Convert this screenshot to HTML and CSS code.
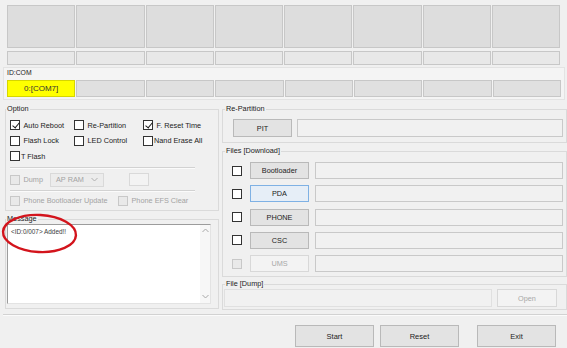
FILE: index.html
```html
<!DOCTYPE html>
<html lang="en">
<head>
  <meta charset="UTF-8" />
  <title>Odin3</title>
  <link rel="stylesheet" href="styles.css">
</head>
<body>

  <div class="ports">
    <div class="cell-row big">
      <div class="cell"></div><div class="cell"></div><div class="cell"></div><div class="cell"></div>
      <div class="cell"></div><div class="cell"></div><div class="cell"></div><div class="cell"></div>
    </div>
    <div class="cell-row small">
      <div class="cell"></div><div class="cell"></div><div class="cell"></div><div class="cell"></div>
      <div class="cell"></div><div class="cell"></div><div class="cell"></div><div class="cell"></div>
    </div>
    <div class="com-box">
      <div class="com-label">ID:COM</div>
      <div class="cell-row com">
        <div class="cell active">0:[COM7]</div><div class="cell"></div><div class="cell"></div><div class="cell"></div>
        <div class="cell"></div><div class="cell"></div><div class="cell"></div><div class="cell"></div>
      </div>
    </div>
  </div>

  <div class="main">
    <div class="col left">
      <fieldset class="group option">
        <legend>Option</legend>
        <div class="group-body">
          <div class="opt-grid">
            <label class="check"><span class="cb on"></span>Auto Reboot</label>
            <label class="check"><span class="cb"></span>Re-Partition</label>
            <label class="check"><span class="cb on"></span>F. Reset Time</label>
            <label class="check"><span class="cb"></span>Flash Lock</label>
            <label class="check"><span class="cb"></span>LED Control</label>
            <label class="check tight"><span class="cb"></span>Nand Erase All</label>
            <label class="check tight"><span class="cb"></span>T Flash</label>
          </div>
          <div class="sep"></div>
          <div class="dump-row">
            <label class="check off dump-label"><span class="cb"></span>Dump</label>
            <div class="select">
              <span>AP RAM</span>
              <svg width="7" height="5" viewBox="0 0 7 5"><polyline points="0.5,1 3.5,4 6.5,1" fill="none" stroke="#b0b0b0" stroke-width="1"/></svg>
            </div>
            <div class="mini-box"></div>
          </div>
          <div class="sep last"></div>
          <div class="phone-row">
            <label class="check off wide"><span class="cb"></span>Phone Bootloader Update</label>
            <label class="check off"><span class="cb"></span>Phone EFS Clear</label>
          </div>
        </div>
      </fieldset>

      <fieldset class="group message">
        <legend>Message</legend>
        <div class="group-body">
          <div class="log">
            <div class="log-text">&lt;ID:0/007&gt; Added!!</div>
            <div class="scroll">
              <svg width="7" height="5" viewBox="0 0 7 5"><polyline points="0.5,4 3.5,1 6.5,4" fill="none" stroke="#a8a8a8" stroke-width="1"/></svg>
              <svg width="7" height="5" viewBox="0 0 7 5"><polyline points="0.5,1 3.5,4 6.5,1" fill="none" stroke="#a8a8a8" stroke-width="1"/></svg>
            </div>
          </div>
        </div>
      </fieldset>
    </div>

    <div class="col right">
      <fieldset class="group repart">
        <legend>Re-Partition</legend>
        <div class="group-body">
          <div class="file-row">
            <button class="btn">PIT</button>
            <div class="field"></div>
          </div>
        </div>
      </fieldset>

      <fieldset class="group files">
        <legend>Files [Download]</legend>
        <div class="group-body">
          <div class="file-row"><span class="cb"></span><button class="btn">Bootloader</button><div class="field"></div></div>
          <div class="file-row"><span class="cb"></span><button class="btn focus">PDA</button><div class="field"></div></div>
          <div class="file-row"><span class="cb"></span><button class="btn">PHONE</button><div class="field"></div></div>
          <div class="file-row"><span class="cb"></span><button class="btn">CSC</button><div class="field"></div></div>
          <div class="file-row off"><span class="cb"></span><button class="btn" disabled>UMS</button><div class="field"></div></div>
        </div>
      </fieldset>

      <fieldset class="group dump">
        <legend>File [Dump]</legend>
        <div class="group-body">
          <div class="file-row">
            <div class="field light"></div>
            <button class="btn" disabled>Open</button>
          </div>
        </div>
      </fieldset>
    </div>
  </div>

  <div class="actions-sep"></div>
  <div class="actions">
    <button class="btn big">Start</button>
    <button class="btn big reset">Reset</button>
    <button class="btn big">Exit</button>
  </div>

  <!-- red marker drawn over the message box -->
  <svg class="marker" width="82" height="46" viewBox="0 0 82 46">
    <ellipse cx="39.5" cy="22.5" rx="36.5" ry="18.5" transform="rotate(3 39.5 22.5)" fill="none" stroke="#d3141c" stroke-width="2.4"/>
  </svg>

</body>
</html>
```

FILE: styles.css
```css
* {
  box-sizing: border-box;
}

body {
  margin: 0;
  width: 567px;
  height: 348px;
  overflow: hidden;
  position: relative;
  background: #f0f0f0;
  font-family: "Liberation Sans", Arial, sans-serif;
  font-size: 7.3px;
  color: #222;
}

/* Port cells */
.ports {
  width: 560px;
  padding: 5px 0 0 7px;
}

.cell-row {
  display: grid;
  grid-template-columns: repeat(8, 1fr);
  column-gap: 1px;
}

.cell {
  background: #dddddd;
  border: 1px solid #c7c7c7;
}

.big .cell {
  height: 43px;
}

.small {
  margin-top: 3px;
}

.small .cell {
  height: 14px;
  background: #e8e8e8;
}

.com-box {
  width: 562px;
  margin: 2px 0 0 -4px;
  padding: 0 3px 2px 3px;
  background: #f4f4f4;
  border: 1px solid #e3e3e3;
}

.com-label {
  line-height: 10px;
  margin-bottom: 2px;
  font-size: 6.8px;
}

.com .cell {
  height: 17px;
  background: #e0e0e0;
}

.com .cell.active {
  background: #ffff00;
  border-color: #d6d600;
  text-align: center;
  line-height: 15px;
  font-size: 8px;
  color: #333;
}

/* Main area */
.main {
  display: grid;
  grid-template-columns: 214px 345px;
  column-gap: 3px;
  padding-left: 5px;
  margin-top: 4px;
}

.col {
  display: flex;
  flex-direction: column;
}

.group {
  margin: 0;
  padding: 0;
  min-width: 0;
  border: 1px solid #dadada;
}

.group legend {
  padding: 0 1px;
  line-height: 10px;
}

.right .group legend {
  margin-left: 2px;
}

.message {
  margin-top: 3px;
}

.files {
  margin-top: 3px;
}

.dump {
  margin-top: 2px;
}

/* Option group */
.option .group-body {
  padding: 3.5px 0 2px 4px;
}

.opt-grid {
  display: grid;
  grid-template-columns: 64px 69px auto;
  grid-auto-rows: 15.5px;
}

.check {
  display: flex;
  align-items: center;
  gap: 3.5px;
  white-space: nowrap;
}

.check.tight {
  gap: 1px;
}

.check.off {
  color: #a3a3a3;
}

.cb {
  position: relative;
  display: inline-block;
  flex: none;
  width: 10px;
  height: 10px;
  background: #fff;
  border: 1px solid #333;
}

.cb.on::after {
  content: "";
  position: absolute;
  left: 2.6px;
  top: 0.2px;
  width: 3px;
  height: 6px;
  border: solid #1a1a1a;
  border-width: 0 1.6px 1.6px 0;
  transform: rotate(40deg);
}

.off .cb {
  background: #e9e9e9;
  border-color: #c8c8c8;
}

.sep {
  width: 185px;
  margin: 3px 0 3px 0;
  border-top: 1px solid #d2d2d2;
  border-bottom: 1px solid #fbfbfb;
}

.sep.last {
  margin-bottom: 1px;
}

.dump-row {
  display: flex;
  align-items: center;
  height: 15px;
}

.dump-label {
  width: 40px;
}

.select {
  width: 54px;
  height: 14px;
  display: flex;
  align-items: center;
  justify-content: space-between;
  padding: 0 5px;
  background: #ececec;
  border: 1px solid #d9d9d9;
  color: #a3a3a3;
}

.mini-box {
  width: 20px;
  height: 13px;
  margin-left: 25px;
  background: #f3f3f3;
  border: 1px solid #d9d9d9;
}

.phone-row {
  display: flex;
  height: 15px;
}

.check.wide {
  width: 108px;
}

/* Message group */
.message .group-body {
  padding: 0 7px 4px 1px;
}

.log {
  display: flex;
  width: 204px;
  height: 80px;
  background: #fff;
  border-top: 1px solid #9c9c9c;
  border-left: 1px solid #9c9c9c;
  border-right: 1px solid #e3e3e3;
  border-bottom: 1px solid #e3e3e3;
}

.log-text {
  flex: 1;
  padding: 3px 3px;
  line-height: 8px;
  font-size: 6.4px;
  color: #3a3a3a;
}

.scroll {
  width: 10px;
  display: flex;
  flex-direction: column;
  justify-content: space-between;
  align-items: center;
  padding: 3px 0 4px;
  background: #f7f7f7;
}

/* Right side */
.repart .group-body {
  padding: 5px 3px 5px 10px;
}

.files .group-body {
  display: flex;
  flex-direction: column;
  gap: 6.3px;
  padding: 6px 3px 4px 9px;
}

.dump .group-body {
  padding: 0 9px 2px 1px;
}

.file-row {
  display: flex;
  align-items: center;
  gap: 5px;
}

.files .file-row {
  height: 17px;
  gap: 0;
}

.files .btn {
  margin-left: 8px;
  height: 17px;
}

.files .field {
  margin-left: 6px;
  height: 17px;
}

.btn {
  flex: none;
  width: 59px;
  height: 18px;
  padding: 0;
  font-family: inherit;
  font-size: 7.3px;
  color: #222;
  background: #e3e3e3;
  border: 1px solid #b9b9b9;
}

.btn.focus {
  background: #e6eef7;
  border-color: #7fb1e4;
}

.btn:disabled {
  color: #a8a8a8;
  background: #f3f3f3;
  border-color: #d8d8d8;
}

.field {
  flex: 1;
  height: 18px;
  background: #f1f1f1;
  border: 1px solid #c9c9c9;
}

.field.light {
  border-color: #e0e0e0;
}

.dump .btn {
  width: 60px;
}

/* Bottom buttons */
.actions-sep {
  margin: 4px 0 0 3px;
  border-top: 1px solid #d2d2d2;
  border-bottom: 1px solid #fbfbfb;
}

.actions {
  display: flex;
  justify-content: flex-end;
  gap: 6px;
  padding-right: 11px;
  margin-top: 9px;
}

.btn.big {
  width: 79px;
  height: 22px;
  font-size: 7.5px;
}

.btn.reset {
  margin-right: 12px;
}

/* annotation */
.marker {
  position: absolute;
  left: 0;
  top: 211px;
}
```
